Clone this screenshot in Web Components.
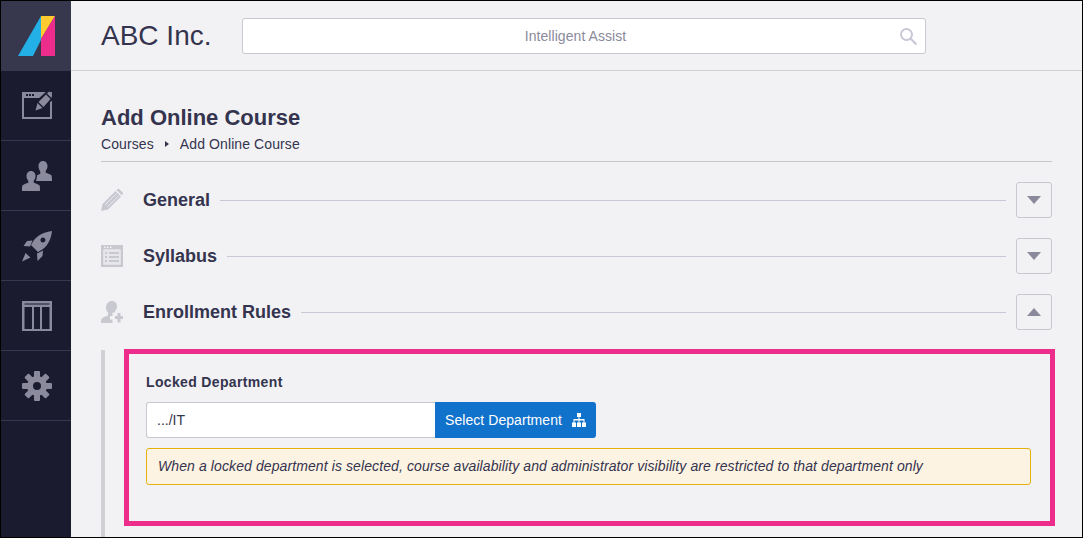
<!DOCTYPE html>
<html>
<head>
<meta charset="utf-8">
<title>Add Online Course</title>
<style>
    html, body { margin: 0; padding: 0; background: #f2f2f5; }
    body { font-family: "Liberation Sans", Arial, sans-serif; color: #34344e; }
</style>
</head>
<body>
<app-shell>
    <side-nav slot="nav"></side-nav>
    <top-bar slot="top" company="ABC Inc."></top-bar>
    <page-head slot="main" heading="Add Online Course" current="Add Online Course"></page-head>
    <section-row slot="main" label="General" icon="pencil"></section-row>
    <section-row slot="main" label="Syllabus" icon="list"></section-row>
    <section-row slot="main" label="Enrollment Rules" icon="useradd" open></section-row>
    <locked-panel slot="main"></locked-panel>
</app-shell>

<script>
class AppShell extends HTMLElement {
    constructor() {
        super();
        this.attachShadow({mode: 'open'});
        this.shadowRoot.innerHTML = `
            <style>
                :host {
                    display: flex;
                    box-sizing: border-box;
                    width: 1083px;
                    height: 538px;
                    border: 1px solid #000;
                    overflow: hidden;
                    background: #f2f2f5;
                }
                #right {
                    flex: 1;
                    min-width: 0;
                    display: flex;
                    flex-direction: column;
                }
                #main {
                    padding: 33px 30px 0 30px;
                    display: flex;
                    flex-direction: column;
                }
            </style>
            <slot name="nav"></slot>
            <div id="right">
                <slot name="top"></slot>
                <div id="main"><slot name="main"></slot></div>
            </div>
        `;
    }
}

const gearTeeth = [0, 45, 90, 135].map(a =>
    `<rect x="12" y="0" width="6" height="30" rx="1" fill="#8a8a9c" transform="rotate(${a} 15 15)"/>`).join('');

const navIcons = [
    `<svg width="30" height="30" viewBox="0 0 30 30">
        <path fill="#8a8a9c" fill-rule="evenodd" d="M0 1H30V28H0zM2 7V26H28V7z"/>
        <rect x="4" y="3" width="2" height="2" fill="#1b1b2f"/><rect x="7" y="3" width="2" height="2" fill="#1b1b2f"/><rect x="10" y="3" width="2" height="2" fill="#1b1b2f"/>
        <path fill="#1b1b2f" d="M12 21L15 9L26 -1L33 6L22 18z"/>
        <path fill="#8a8a9c" d="M13.500 19.500L15.500 12L20.500 17zM16.500 11L24 3.500L28.500 8L21.500 16zM25 2.500L26.500 1C27 .5 27.700 .5 28.200 1L30 2.800C30.500 3.300 30.500 4 30 4.500L29.500 7z"/>
    </svg>`,
    `<svg width="30" height="30" viewBox="0 0 30 30">
        <path fill="#8a8a9c" d="M21 0c2.700 0 4.500 2.200 4.500 5 0 2-.7 3.700-1.800 4.800v1.900c2 .8 4.800 1.400 5.700 2.600.5.700.6 3.200.6 5.700H14c0-2.500.1-4 .4-5 .7-1 2.900-1.700 3.900-2.300v-1.900C17.200 8.700 16.500 7 16.500 5c0-2.800 1.800-5 4.500-5z"/>
        <path fill="#1b1b2f" d="M9 8.500c3.700 0 6 2.800 6 6.500 0 1.500-.3 3-1 4.200l1 2 4 2.800-4 2-8-8z"/>
        <path fill="#8a8a9c" d="M9 10c2.700 0 4.500 2.200 4.500 5 0 2-.7 3.700-1.800 4.800v1.900c2 .8 5 1.500 5.900 2.800.4.700.4 3 .4 5.500H0c0-2.500 0-4.800.4-5.500.9-1.300 3.900-2 5.900-2.800v-1.900C5.200 18.700 4.500 17 4.500 15c0-2.800 1.800-5 4.500-5z"/>
    </svg>`,
    `<svg width="30" height="31" viewBox="0 0 30 31">
        <path fill="#8a8a9c" fill-rule="evenodd" d="M30 0C22 1 16 4 12 9L9 14L16 21L21 18C26 14 29 8 30 0zM21 6.500a2.500 2.500 0 1 0 0 5a2.500 2.500 0 0 0 0-5z"/>
        <path fill="#8a8a9c" d="M10.500 9.500L5 10L1.500 15L8 15.500zM21 19.500L20.500 25L15.500 30L15 22.500z"/>
        <path fill="#8a8a9c" d="M0 30.500L3.500 22L8.500 26.500z"/>
    </svg>`,
    `<svg width="30" height="30" viewBox="0 0 30 30">
        <path fill="#8a8a9c" fill-rule="evenodd" d="M0 0H30V30H0zM2.500 2.500V3.500H27.500V2.500zM2.500 6V28H10V6zM12 6V28H18V6zM20 6V28H27.500V6z"/>
    </svg>`,
    `<svg width="30" height="30" viewBox="0 0 30 30">
        ${gearTeeth}
        <circle cx="15" cy="15" r="10" fill="#8a8a9c"/>
        <circle cx="15" cy="15" r="4" fill="#1b1b2f"/>
    </svg>`
];

class SideNav extends HTMLElement {
    constructor() {
        super();
        this.attachShadow({mode: 'open'});
        this.shadowRoot.innerHTML = `
            <style>
                :host {
                    display: flex;
                    flex-direction: column;
                    width: 70px;
                    height: 100%;
                    flex: none;
                    background: #1b1b2f;
                }
                #logo {
                    height: 70px;
                    box-sizing: border-box;
                    padding-left: 1px;
                    flex: none;
                    background: #37374e;
                    display: flex;
                    align-items: center;
                    justify-content: center;
                }
                .item {
                    height: 70px;
                    box-sizing: border-box;
                    padding: 1px 0 0 2px;
                    flex: none;
                    border-bottom: 1px solid #37374e;
                    display: flex;
                    align-items: flex-start;
                    justify-content: center;
                }
                .item svg { margin-top: 19px; }
            </style>
            <div id="logo">
                <svg width="37" height="40" viewBox="0 0 37 40">
                    <polygon fill="#ffcb2f" points="23,0 37,0 23,23"/>
                    <polygon fill="#ec2d8c" points="23,23 37,0 37,40 23,40"/>
                    <polygon fill="#22b0e6" points="0,40 23,0 23,24 15,40"/>
                </svg>
            </div>
            ${navIcons.map(svg => `<div class="item">${svg}</div>`).join('')}
        `;
    }
}

class TopBar extends HTMLElement {
    constructor() {
        super();
        this.attachShadow({mode: 'open'});
        this.shadowRoot.innerHTML = `
            <style>
                :host {
                    display: flex;
                    align-items: center;
                    box-sizing: border-box;
                    height: 70px;
                    flex: none;
                    padding: 0 156px 0 30px;
                    border-bottom: 1px solid #d0d0d5;
                }
                #company {
                    font-size: 28px;
                    color: #34344e;
                    width: 141px;
                    flex: none;
                }
                #search {
                    flex: 1;
                    box-sizing: border-box;
                    height: 36px;
                    position: relative;
                    background: #fff;
                    border: 1px solid #c8c8d0;
                    border-radius: 3px;
                    padding-right: 17px;
                    display: flex;
                    align-items: center;
                    justify-content: center;
                    font-size: 14px;
                    letter-spacing: .06px;
                    color: #8a8a9c;
                }
                svg { position: absolute; right: 8px; top: 9px; }
            </style>
            <div id="company"></div>
            <div id="search">
                Intelligent Assist
                <svg width="17" height="17" viewBox="0 0 17 17">
                    <circle cx="6.500" cy="6.500" r="5.500" fill="none" stroke="#c8c8d6" stroke-width="2"/>
                    <path d="M10.500 10.500L16.500 16.500" stroke="#c8c8d6" stroke-width="2.200" fill="none"/>
                </svg>
            </div>
        `;
        this.shadowRoot.querySelector('#company').textContent = this.getAttribute('company');
    }
}

class PageHead extends HTMLElement {
    constructor() {
        super();
        this.attachShadow({mode: 'open'});
        this.shadowRoot.innerHTML = `
            <style>
                :host {
                    display: block;
                    border-bottom: 1px solid #c8c8cc;
                    padding-bottom: 7px;
                    margin-bottom: 20px;
                }
                h1 {
                    margin: 0 0 2px 0;
                    font-size: 22px;
                    line-height: 28px;
                    font-weight: bold;
                    color: #34344e;
                }
                #crumbs {
                    display: flex;
                    align-items: center;
                    font-size: 14px;
                    line-height: 20px;
                    letter-spacing: .1px;
                    color: #34344e;
                }
                i {
                    width: 0;
                    height: 0;
                    margin: 0 11px;
                    border-left: 4px solid #34344e;
                    border-top: 3.5px solid transparent;
                    border-bottom: 3.5px solid transparent;
                }
            </style>
            <h1></h1>
            <div id="crumbs"><span>Courses</span><i></i><span id="cur"></span></div>
        `;
        this.shadowRoot.querySelector('h1').textContent = this.getAttribute('heading');
        this.shadowRoot.querySelector('#cur').textContent = this.getAttribute('current');
    }
}

const rowIcons = {
    pencil: `<svg width="22" height="22" viewBox="0 0 22 22">
        <path fill="#c8c8d0" d="M0 22l1.500-7L14.500 2l5.500 5.500L7 20.500zM15.500 1l1-1c.5-.4 1.200-.4 1.700 0l3.500 3.500c.4.500.4 1.200 0 1.700l-1 1z"/>
        <path stroke="#f2f2f5" stroke-width=".8" fill="none" d="M4 16L15.500 4.500M6.500 18L18 6.500"/>
    </svg>`,
    list: `<svg width="22" height="22" viewBox="0 0 22 22">
        <path fill="#c8c8d0" fill-rule="evenodd" d="M0 0h22v22H0zM2.500 4.500v15h17v-15zM3 1.500h1.500V3H3zM6 1.500h1.500V3H6zM9 1.500h1.500V3H9z"/>
        <path fill="#e6e6eb" d="M2.500 4.500h17v15h-17z"/>
        <path fill="#c8c8d0" d="M4 7h2v2H4zM8 7h10v2H8zM4 11h2v2H4zM8 11h10v2H8zM4 15h2v2H4zM8 15h10v2H8z"/>
    </svg>`,
    useradd: `<svg width="22" height="22" viewBox="0 0 22 22">
        <path fill="#c8c8d0" d="M11 0c3 0 5 2.300 5 5.300 0 2.200-.8 3.900-2 5v1.200h-2.500v3.500h-2.500v3.500h2.500v3.500H0c0-2 0-3.200.4-4 .9-1.500 4.300-2.500 6.600-3.500v-3c-1.200-1.100-2-2.800-2-5C5 2.300 8 0 11 0z"/>
        <path fill="#c8c8d0" d="M16.500 12h3v3h2.500v3h-2.500v3.500h-3V18H14v-3h2.500z"/>
    </svg>`
};

class SectionRow extends HTMLElement {
    constructor() {
        super();
        this.attachShadow({mode: 'open'});
        const open = this.hasAttribute('open');
        this.shadowRoot.innerHTML = `
            <style>
                :host {
                    display: flex;
                    align-items: center;
                    height: 36px;
                    margin-bottom: 20px;
                }
                #icon { width: 42px; flex: none; display: flex; }
                #label {
                    font-size: 18px;
                    font-weight: bold;
                    color: #34344e;
                    flex: none;
                }
                #line {
                    flex: 1;
                    height: 1px;
                    background: #c8c8d6;
                    margin: 0 10px;
                }
                button {
                    width: 36px;
                    height: 36px;
                    box-sizing: border-box;
                    padding: 0;
                    flex: none;
                    background: transparent;
                    border: 1px solid #c8c8d0;
                    border-radius: 3px;
                    display: flex;
                    align-items: center;
                    justify-content: center;
                }
                b {
                    width: 0;
                    height: 0;
                    border-left: 7px solid transparent;
                    border-right: 7px solid transparent;
                }
                b.down { border-top: 8px solid #8a8a9c; }
                b.up { border-bottom: 8px solid #8a8a9c; }
            </style>
            <div id="icon">${rowIcons[this.getAttribute('icon')]}</div>
            <div id="label"></div>
            <div id="line"></div>
            <button><b class="${open ? 'up' : 'down'}"></b></button>
        `;
        this.shadowRoot.querySelector('#label').textContent = this.getAttribute('label');
    }
}

class LockedPanel extends HTMLElement {
    constructor() {
        super();
        this.attachShadow({mode: 'open'});
        this.shadowRoot.innerHTML = `
            <style>
                :host {
                    display: flex;
                    flex-direction: column;
                    box-sizing: border-box;
                    border-left: 4px solid #d0d0d5;
                    padding-left: 19px;
                    margin-right: -3px;
                    height: 190px;
                }
                #box {
                    box-sizing: border-box;
                    flex: none;
                    height: 177px;
                    margin-top: -1px;
                    border: 5px solid #ec2d8c;
                    padding: 19px 19px 0 17px;
                }
                #title {
                    font-size: 14px;
                    line-height: 18px;
                    font-weight: bold;
                    letter-spacing: .35px;
                    color: #34344e;
                    margin-bottom: 11px;
                }
                #pick { display: flex; height: 36px; }
                #val {
                    box-sizing: border-box;
                    width: 289px;
                    background: #fff;
                    border: 1px solid #c8c8d0;
                    border-right: 0;
                    border-radius: 3px 0 0 3px;
                    padding-left: 10px;
                    font-size: 14px;
                    line-height: 34px;
                    color: #34344e;
                }
                #btn {
                    width: 161px;
                    box-sizing: border-box;
                    background: #1172cc;
                    color: #fff;
                    border-radius: 0 3px 3px 0;
                    font-size: 14px;
                    letter-spacing: .06px;
                    display: flex;
                    align-items: center;
                    justify-content: space-between;
                    padding: 0 10px;
                }
                #note {
                    box-sizing: border-box;
                    margin-top: 10px;
                    height: 37px;
                    background: #fdf3e3;
                    border: 1px solid #e6b00f;
                    border-radius: 3px;
                    padding-left: 11px;
                    font-size: 14px;
                    line-height: 35px;
                    font-style: italic;
                    letter-spacing: .1px;
                    color: #34344e;
                }
            </style>
            <div id="box">
                <div id="title">Locked Department</div>
                <div id="pick">
                    <div id="val">.../IT</div>
                    <div id="btn">Select Department
                        <svg width="14" height="14" viewBox="0 0 14 14">
                            <path fill="#fff" d="M5 0h4v4H7.500v2H12.500v3.500H14V14h-4V9.500h1.500V7.500h-4v2H9V14H5V9.500h1.500V7.500h-4v2H4V14H0V9.500h1.500V6h5V4H5z"/>
                        </svg>
                    </div>
                </div>
                <div id="note">When a locked department is selected, course availability and administrator visibility are restricted to that department only</div>
            </div>
        `;
    }
}

customElements.define('app-shell', AppShell);
customElements.define('side-nav', SideNav);
customElements.define('top-bar', TopBar);
customElements.define('page-head', PageHead);
customElements.define('section-row', SectionRow);
customElements.define('locked-panel', LockedPanel);
</script>
</body>
</html>
